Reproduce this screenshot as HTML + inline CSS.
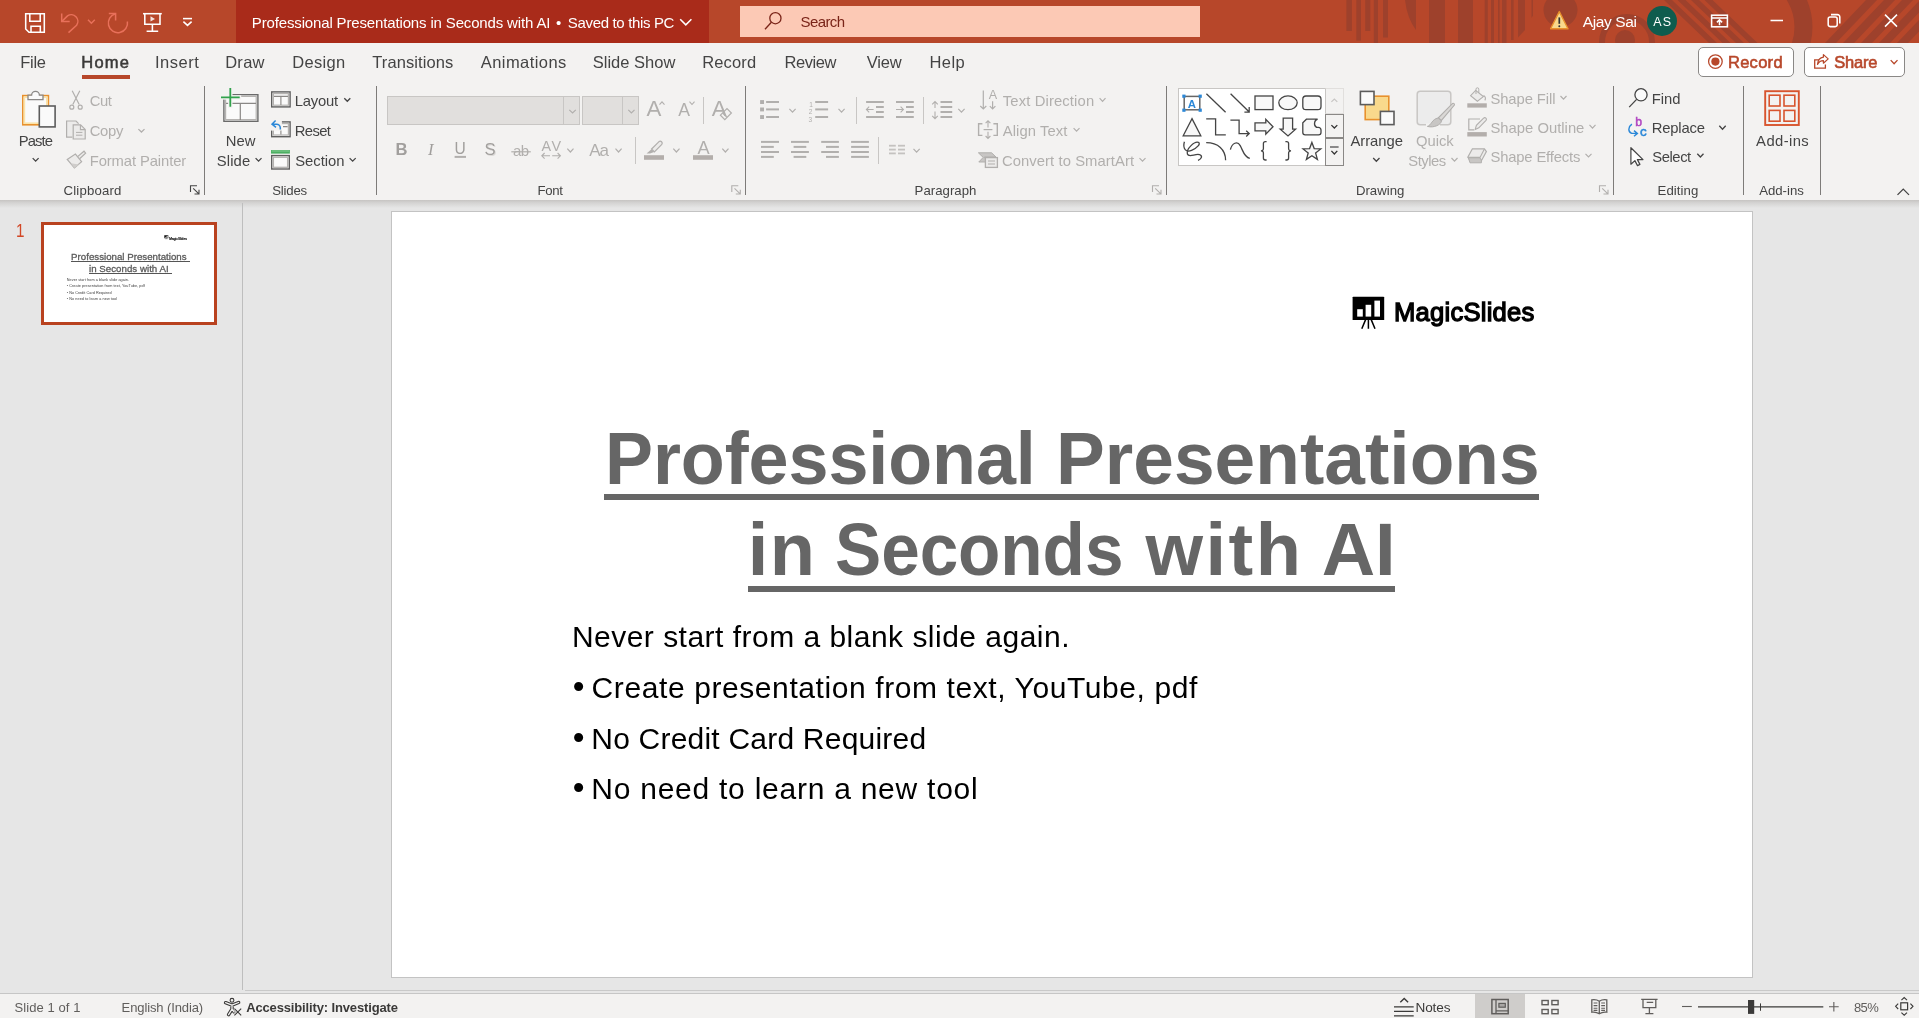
<!DOCTYPE html>
<html lang="en"><head><meta charset="utf-8"><title>PowerPoint</title><style>
html,body{margin:0;padding:0}
body{width:1919px;height:1018px;overflow:hidden;position:relative;background:#e6e6e6;font-family:"Liberation Sans",sans-serif;}
.b{position:absolute;box-sizing:border-box}
.t{position:absolute;white-space:pre;line-height:1}
svg{overflow:visible}
</style></head>
<body>
<div id="app" style="will-change:transform">
<!-- s_title -->
<div class="b" style="left:0px;top:0px;width:1919px;height:43px;background:#B7472A;"></div>
<svg class="b" style="left:0;top:0;overflow:hidden" width="1919" height="43" viewBox="0 0 1919 43" fill="#9E412C"><rect x="1346.4" y="0" width="5.5" height="31"/><rect x="1356.3" y="0" width="4.7" height="40.6"/><rect x="1365.2" y="0" width="5.1" height="31"/><rect x="1373.8" y="0" width="4.2" height="43"/><rect x="1383" y="0" width="5" height="37.5"/><rect x="1429" y="0" width="16" height="43"/><rect x="1458" y="0" width="15" height="43"/><rect x="1484.7" y="0" width="3.1" height="43"/><rect x="1491" y="0" width="3" height="43"/><rect x="1498" y="0" width="1.6" height="43"/><rect x="1502" y="0" width="4.5" height="43"/><rect x="1511" y="0" width="2.6" height="40"/><path d="M1405 0H1416V30Q1407 18 1405 0Z"/><path d="M1518 0H1525V30L1518 37.5Z"/><path d="M1531.5 0H1533V15.6L1531.5 18Z"/><circle cx="1560.5" cy="10" r="17"/><circle cx="1627" cy="42" r="25" fill="none" stroke="#9E412C" stroke-width="6"/><circle cx="1625" cy="40" r="10"/><path d="M1664 0H1672L1717 43H1709Z"/><path d="M1677.5 0H1685.5L1730.5 43H1722.5Z"/><path d="M1691 0H1699L1744 43H1736Z"/><path d="M1704.5 0H1712.5L1757.5 43H1749.5Z"/><path d="M1825 43H1836L1877 0H1866Z"/><path d="M1843 43H1854L1895 0H1884Z"/><path d="M1861 43H1872L1913 0H1902Z"/><path d="M1879 43H1890L1931 0H1920Z"/><path d="M1897 43H1908L1949 0H1938Z"/><path d="M1773.4 -25A60 60 0 0 1 1773.4 79" fill="none" stroke="#9E412C" stroke-width="18"/></svg>
<div class="b" style="left:236px;top:0px;width:472.5px;height:43px;background:#A92B1A;"></div>
<svg class="b" style="left:0px;top:0px;" width="1919" height="43" viewBox="0 0 1919 43" fill="none"><path d="M25.7 13.7H44.3V32.3H29L25.7 29Z" stroke="#fff" stroke-width="1.55" fill="none"/><path d="M29.8 13.7V21.3H40.2V13.7" stroke="#fff" stroke-width="1.55" fill="none"/><path d="M31 32.3V26.2H40.3V32.3" stroke="#fff" stroke-width="1.55" fill="none"/><path d="M61.7 13.6V21.6H69.7" stroke="#E8705A" stroke-width="1.5" fill="none"/><path d="M61.9 21.4L67.5 15.9A6.6 6.6 0 0 1 76.6 25.2L68.5 32.6" stroke="#E8705A" stroke-width="1.5" fill="none"/><path d="M88 19.8L91.4 23.2L94.8 19.8" stroke="#E8705A" stroke-width="1.5" fill="none"/><path d="M108.8 13.6H115.6V20.4" stroke="#E8705A" stroke-width="1.5" fill="none"/><path d="M115.4 13.8A9.6 9.6 0 1 0 127.4 21.5" stroke="#E8705A" stroke-width="1.5" fill="none"/><path d="M143 13.7H161.8" stroke="#fff" stroke-width="1.55" fill="none"/><path d="M144.8 13.7V24.3H160V13.7" stroke="#fff" stroke-width="1.55" fill="none"/><path d="M152.4 24.3V31.3M146.6 31.3H158.2" stroke="#fff" stroke-width="1.55" fill="none"/><path d="M150.5 16.3L155 18.9L150.5 21.5Z" fill="#fff" opacity=".85"/><path d="M183 18.6H192" stroke="#fff" stroke-width="1.55" fill="none"/><path d="M183.4 21.6L187.5 25.4L191.6 21.6" stroke="#fff" stroke-width="1.55" fill="none"/><path d="M680.2 19.2L685.8 24.8L691.4 19.2" stroke="#fff" stroke-width="1.55" fill="none"/></svg>
<span class="t" id="t0" style="left:251.83px;top:15.00px;font-size:15.00px;color:#fff;letter-spacing:-0.150px;">Professional Presentations in Seconds with AI</span>
<span class="t" id="t1" style="left:556.02px;top:15.00px;font-size:15.00px;color:#fff;">•</span>
<span class="t" id="t2" style="left:567.86px;top:15.00px;font-size:15.00px;color:#fff;letter-spacing:-0.342px;">Saved to this PC</span>
<div class="b" style="left:740px;top:6px;width:460px;height:31px;background:#FCC9B5;"></div>
<svg class="b" style="left:740px;top:6px;" width="60" height="31" viewBox="0 0 60 31" fill="none"><circle cx="35.4" cy="12.2" r="5.6" stroke="#7A2418" stroke-width="1.3"/><path d="M31.4 16.2L25 23.2" stroke="#7A2418" stroke-width="1.3"/></svg>
<span class="t" id="t3" style="left:800.56px;top:14.00px;font-size:15.00px;color:#7A2418;letter-spacing:-0.609px;">Search</span>
<svg class="b" style="left:1548px;top:8px;" width="22" height="22" viewBox="0 0 22 22" fill="none"><path d="M11.3 3.600L20 20.800H2.600Z" fill="#F9D98C" stroke="#E8912D" stroke-width="1.400" stroke-linejoin="round"/><path d="M11.3 9.400V15.800" stroke="#333" stroke-width="1.700"/><circle cx="11.3" cy="18.200" r="1" fill="#333"/></svg>
<span class="t" id="t4" style="left:1582.77px;top:14.00px;font-size:15.50px;color:#fff;letter-spacing:-0.372px;">Ajay Sai</span>
<div class="b" style="left:1647px;top:6px;width:30px;height:30px;background:#0F5C4E;border-radius:50%;"></div>
<span class="t" id="t5" style="left:1653.22px;top:16.00px;font-size:12.50px;color:#fff;letter-spacing:1.210px;">AS</span>
<svg class="b" style="left:0px;top:0px;" width="1919" height="43" viewBox="0 0 1919 43" fill="none"><rect x="1711.6" y="15.2" width="15.8" height="11.6" stroke="#fff" stroke-width="1.55" fill="none"/><path d="M1711.6 18H1727.4" stroke="#fff" stroke-width="1.55" fill="none"/><path d="M1719.5 25.2V20M1716.9 22.400L1719.5 19.800L1722.100 22.400" stroke="#fff" stroke-width="1.55" fill="none"/><path d="M1770.5 20.5H1783" stroke="#fff" stroke-width="1.55" fill="none"/><rect x="1828.2" y="17" width="9" height="9.6" rx="2" stroke="#fff" stroke-width="1.55" fill="none"/><path d="M1831 14.6H1837.4A2.4 2.4 0 0 1 1839.8 17V23.6" stroke="#fff" stroke-width="1.55" fill="none"/><path d="M1885 14.6L1897 26.6M1897 14.6L1885 26.6" stroke="#fff" stroke-width="1.55" fill="none"/></svg>
<!-- s_tabs -->
<div class="b" style="left:0px;top:43px;width:1919px;height:157px;background:#F3F2F1;"></div>
<span class="t" id="t6" style="left:20.28px;top:54.00px;font-size:16.50px;color:#444;letter-spacing:-0.277px;">File</span>
<span class="t" id="t7" style="left:154.90px;top:54.00px;font-size:16.50px;color:#444;letter-spacing:0.512px;">Insert</span>
<span class="t" id="t8" style="left:225.15px;top:54.00px;font-size:16.50px;color:#444;letter-spacing:0.292px;">Draw</span>
<span class="t" id="t9" style="left:292.28px;top:54.00px;font-size:16.50px;color:#444;letter-spacing:0.322px;">Design</span>
<span class="t" id="t10" style="left:372.26px;top:54.00px;font-size:16.50px;color:#444;letter-spacing:0.098px;">Transitions</span>
<span class="t" id="t11" style="left:480.72px;top:54.00px;font-size:16.50px;color:#444;letter-spacing:0.442px;">Animations</span>
<span class="t" id="t12" style="left:592.72px;top:54.00px;font-size:16.50px;color:#444;letter-spacing:0.006px;">Slide Show</span>
<span class="t" id="t13" style="left:702.15px;top:54.00px;font-size:16.50px;color:#444;letter-spacing:0.176px;">Record</span>
<span class="t" id="t14" style="left:784.48px;top:54.00px;font-size:16.50px;color:#444;letter-spacing:-0.408px;">Review</span>
<span class="t" id="t15" style="left:866.63px;top:54.00px;font-size:16.50px;color:#444;letter-spacing:-0.100px;">View</span>
<span class="t" id="t16" style="left:929.41px;top:54.00px;font-size:16.50px;color:#444;letter-spacing:0.474px;">Help</span>
<span class="t" id="t17" style="left:81.25px;top:54.00px;font-size:16.50px;color:#3b3a39;letter-spacing:1.228px;-webkit-text-stroke:.55px #3b3a39;">Home</span>
<div class="b" style="left:82px;top:75.3px;width:47.8px;height:3.6px;background:#B7472A;"></div>
<!-- s_rib1 -->
<svg class="b" style="left:0px;top:0px;" width="1919" height="200" viewBox="0 0 1919 200" fill="none"><rect x="22.8" y="95.6" width="25.6" height="29.2" fill="#FAFAFA" stroke="#E8912D" stroke-width="1.6"/><rect x="24.4" y="97.2" width="22.4" height="26" fill="none" stroke="#FBE3A8" stroke-width="1.6"/><path d="M28 99.6V95.2H31.6A3.9 3.9 0 0 1 39.4 95.2H43V99.6Z" fill="#FAFAFA" stroke="#8a8886" stroke-width="1.3"/><rect x="39.3" y="106" width="15.8" height="20.9" fill="#FAFAFA" stroke="#5c5c5c" stroke-width="1.6"/><path d="M32.7 158.1L35.65 161.1L38.6 158.1" stroke="#444" stroke-width="1.3" fill="none"/><path d="M72.2 90.8L79.2 104.4M79.8 90.8L72.8 104.4" stroke="#B1AFAD" stroke-width="1.2"/><circle cx="71.8" cy="107.2" r="2" stroke="#B1AFAD" stroke-width="1.2"/><circle cx="80.2" cy="107.2" r="2" stroke="#B1AFAD" stroke-width="1.2"/><path d="M72.4 137.2H66.6V121H76L78.6 123.6" stroke="#B1AFAD" stroke-width="1.2" fill="#ECEBEA"/><path d="M73.2 124.8H80.6L85.2 129.4V139H73.2Z" stroke="#B1AFAD" stroke-width="1.2" fill="#ECEBEA"/><path d="M80.4 125V129.6H85" stroke="#B1AFAD" stroke-width="1.1"/><path d="M76 132.4H82.4M76 135.2H82.4" stroke="#B1AFAD" stroke-width="1"/><path d="M138.4 129.1L141.45 132L144.5 129.1" stroke="#B1AFAD" stroke-width="1.3" fill="none"/><path d="M77.6 156.6L84 151.2L85.6 153.2L79.6 158.8" stroke="#B1AFAD" stroke-width="1.2" fill="#ECEBEA"/><path d="M67.2 159.4L75.4 154L81.6 161.6L74.4 168Z" stroke="#B1AFAD" stroke-width="1.2" fill="#ECEBEA"/><path d="M70.6 163.2L79 164.6L74.4 168Z" fill="#CFCDCB"/><path d="M190.5 192V185.7H197" stroke="#444" stroke-width="1.1" fill="none"/><path d="M193.2 188.4L198.9 193.9M194.5 194H199V189.7" stroke="#444" stroke-width="1.1" fill="none"/><rect x="223.9" y="94.7" width="34" height="26.6" fill="#FAFAFA" stroke="#6a6a6a" stroke-width="1.4"/><rect x="225.6" y="96.4" width="30.6" height="23.2" fill="none" stroke="#B5B3B1" stroke-width="1.2"/><path d="M226 103.4H256M240.3 103.4V120" stroke="#8a8886" stroke-width="1.2"/><rect x="219.6" y="95.2" width="21.6" height="4.4" fill="#F3F2F1"/><rect x="228.100" y="88" width="4.400" height="20.200" fill="#F3F2F1"/><rect x="219.600" y="91" width="10" height="6" fill="#F3F2F1"/><path d="M221 97.4H239.7M230.3 88V106.8" stroke="#31A24C" stroke-width="1.8"/><path d="M255.6 158.1L258.55 161.1L261.5 158.1" stroke="#444" stroke-width="1.3" fill="none"/><rect x="271.7" y="91.9" width="18.4" height="15" fill="#FAFAFA" stroke="#5f5f5f" stroke-width="1.4"/><rect x="273.4" y="93.6" width="15" height="11.6" fill="none" stroke="#B5B3B1" stroke-width="1.2"/><path d="M274 96.4H288M280.9 96.4V105" stroke="#8a8886" stroke-width="1.1"/><path d="M344.3 98.2L347.3 101.3L350.3 98.2" stroke="#444" stroke-width="1.3" fill="none"/><rect x="271.7" y="121.9" width="18.4" height="14.8" fill="#FAFAFA" stroke="#5f5f5f" stroke-width="1.4"/><rect x="273.4" y="123.6" width="15" height="11.4" fill="none" stroke="#B5B3B1" stroke-width="1.2"/><path d="M283 126.6H287.6M280.9 129.5V134.6" stroke="#8a8886" stroke-width="1.1"/><rect x="269.5" y="118.6" width="12.4" height="12" fill="#F3F2F1"/><path d="M275.6 120.4L272 124.2L276 127.4M272.2 124.2H276.6A3.7 3.7 0 0 1 280.3 127.9V129.6" stroke="#2B88D8" stroke-width="1.5" fill="none"/><rect x="271" y="150" width="18.9" height="3.6" fill="#4CAF62"/><rect x="271.7" y="150.4" width="17.6" height="1.2" fill="#7CC98C"/><rect x="271.7" y="155.6" width="17.6" height="13.4" fill="#FAFAFA" stroke="#5f5f5f" stroke-width="1.4"/><rect x="273.4" y="157.3" width="14.2" height="10" fill="none" stroke="#B5B3B1" stroke-width="1.3"/><path d="M349.6 158.1L352.65 161.1L355.7 158.1" stroke="#444" stroke-width="1.3" fill="none"/></svg>
<span class="t" id="t18" style="left:18.68px;top:134.00px;font-size:14.80px;color:#444;letter-spacing:-0.908px;">Paste</span>
<span class="t" id="t19" style="left:89.70px;top:94.00px;font-size:14.80px;color:#B1AFAD;letter-spacing:-0.389px;">Cut</span>
<span class="t" id="t20" style="left:89.70px;top:124.00px;font-size:14.80px;color:#B1AFAD;letter-spacing:-0.309px;">Copy</span>
<span class="t" id="t21" style="left:89.72px;top:154.00px;font-size:14.80px;color:#B1AFAD;letter-spacing:-0.105px;">Format Painter</span>
<span class="t" id="t22" style="left:63.55px;top:184.00px;font-size:13.20px;color:#444;letter-spacing:0.169px;">Clipboard</span>
<span class="t" id="t23" style="left:225.68px;top:134.00px;font-size:14.80px;color:#444;letter-spacing:0.133px;">New</span>
<span class="t" id="t24" style="left:216.81px;top:154.00px;font-size:14.80px;color:#444;letter-spacing:0.119px;">Slide</span>
<span class="t" id="t25" style="left:294.70px;top:94.00px;font-size:14.80px;color:#444;letter-spacing:-0.184px;">Layout</span>
<span class="t" id="t26" style="left:294.70px;top:124.00px;font-size:14.80px;color:#444;letter-spacing:-0.591px;">Reset</span>
<span class="t" id="t27" style="left:295.23px;top:154.00px;font-size:14.80px;color:#444;letter-spacing:-0.022px;">Section</span>
<span class="t" id="t28" style="left:272.29px;top:184.00px;font-size:13.20px;color:#444;letter-spacing:-0.217px;">Slides</span>
<div class="b" style="left:204px;top:86px;width:1px;height:109px;background:#7d7b79;"></div>
<div class="b" style="left:376px;top:86px;width:1px;height:109px;background:#7d7b79;"></div>
<!-- s_rib2 -->
<div class="b" style="left:387px;top:96px;width:193px;height:29px;background:#E1DFDD;border:1px solid #C8C6C4;"></div>
<div class="b" style="left:563px;top:97px;width:1px;height:27px;background:#C8C6C4;"></div>
<div class="b" style="left:582px;top:96px;width:57px;height:29px;background:#E1DFDD;border:1px solid #C8C6C4;"></div>
<div class="b" style="left:622px;top:97px;width:1px;height:27px;background:#C8C6C4;"></div>
<div class="b" style="left:703px;top:97px;width:1px;height:27px;background:#C8C6C4;"></div>
<div class="b" style="left:635px;top:137px;width:1px;height:27px;background:#C8C6C4;"></div>
<div class="b" style="left:856px;top:97px;width:1px;height:27px;background:#C8C6C4;"></div>
<div class="b" style="left:923px;top:97px;width:1px;height:27px;background:#C8C6C4;"></div>
<div class="b" style="left:878px;top:137px;width:1px;height:27px;background:#C8C6C4;"></div>
<svg class="b" style="left:0px;top:0px;" width="1919" height="200" viewBox="0 0 1919 200" fill="none"><path d="M569.3 109.9L572.55 113L575.8 109.9" stroke="#B1AFAD" stroke-width="1.2" fill="none"/><path d="M628.3 109.9L631.4 113L634.5 109.9" stroke="#B1AFAD" stroke-width="1.2" fill="none"/><path d="M659.5 104.6L662 101.8L664.5 104.6" stroke="#B1AFAD" stroke-width="1.1" fill="none"/><path d="M689.5 101.7L692 104.5L694.5 101.7" stroke="#B1AFAD" stroke-width="1.1" fill="none"/><path d="M720.4 115.2L727 108.6L731.4 113L724.8 119.6Z" fill="#F3F2F1" stroke="#B1AFAD" stroke-width="1.2"/><path d="M722.6 113L727 117.4" stroke="#B1AFAD" stroke-width="1.2"/><path d="M454.6 156.9H466" stroke="#B1AFAD" stroke-width="2"/><path d="M511.3 151.8H530.8" stroke="#B1AFAD" stroke-width="1.2"/><path d="M541.8 155.8H550M544.6 153L541.8 155.8L544.6 158.6M552.2 155.8H560.4M557.6 153L560.4 155.8L557.6 158.6" stroke="#B1AFAD" stroke-width="1.1" fill="none"/><path d="M567.3 148.7L570.4 152L573.5 148.7" stroke="#B1AFAD" stroke-width="1.2" fill="none"/><path d="M615.5 148.7L618.55 152L621.6 148.7" stroke="#B1AFAD" stroke-width="1.2" fill="none"/><path d="M651.6 149L659 141.6A2 2 0 0 1 661.8 144.4L654.4 151.8Z" fill="#ECEBEA" stroke="#B1AFAD" stroke-width="1.2"/><path d="M651.4 149.2L654.2 152L650 153.4H646.6Z" fill="#B1AFAD"/><rect x="644" y="155.2" width="20" height="4.6" fill="#B3AEAB"/><path d="M673.3 148.7L676.4 152L679.5 148.7" stroke="#B1AFAD" stroke-width="1.2" fill="none"/><rect x="693" y="155.2" width="20" height="4.6" fill="#B3AEAB"/><path d="M722.3 148.7L725.4 152L728.5 148.7" stroke="#B1AFAD" stroke-width="1.2" fill="none"/><path d="M731.8 192V185.7H738.3" stroke="#B1AFAD" stroke-width="1.1" fill="none"/><path d="M734.5 188.4L740.2 193.9M735.8 194H740.3V189.7" stroke="#B1AFAD" stroke-width="1.1" fill="none"/><rect x="760.1" y="100.1" width="3.9" height="3.9" fill="#B1AFAD"/><path d="M766.1 102H779" stroke="#B1AFAD" stroke-width="2"/><path d="M815.2 102H828.1" stroke="#B1AFAD" stroke-width="2"/><rect x="760.1" y="107.5" width="3.9" height="3.9" fill="#B1AFAD"/><path d="M766.1 109.4H779" stroke="#B1AFAD" stroke-width="2"/><path d="M815.2 109.4H828.1" stroke="#B1AFAD" stroke-width="2"/><rect x="760.1" y="115.1" width="3.9" height="3.9" fill="#B1AFAD"/><path d="M766.1 117H779" stroke="#B1AFAD" stroke-width="2"/><path d="M815.2 117H828.1" stroke="#B1AFAD" stroke-width="2"/><path d="M789.4 108.9L792.5 112.1L795.6 108.9" stroke="#B1AFAD" stroke-width="1.2" fill="none"/><path d="M838.5 108.9L841.55 112.1L844.6 108.9" stroke="#B1AFAD" stroke-width="1.2" fill="none"/><path d="M866.1 102H883.8" stroke="#B1AFAD" stroke-width="2"/><path d="M866.1 117H883.8" stroke="#B1AFAD" stroke-width="2"/><path d="M876 107H883.8" stroke="#B1AFAD" stroke-width="2"/><path d="M876 112H883.8" stroke="#B1AFAD" stroke-width="2"/><path d="M866.4 109.5H873.6M869.2 106.7L866.4 109.5L869.2 112.3" stroke="#B1AFAD" stroke-width="1.1" fill="none"/><path d="M896 102H913.8" stroke="#B1AFAD" stroke-width="2"/><path d="M896 117H913.8" stroke="#B1AFAD" stroke-width="2"/><path d="M906 107H913.8" stroke="#B1AFAD" stroke-width="2"/><path d="M906 112H913.8" stroke="#B1AFAD" stroke-width="2"/><path d="M896 109.5H903.4M900.6 106.7L903.4 109.5L900.6 112.3" stroke="#B1AFAD" stroke-width="1.1" fill="none"/><path d="M940.5 102H952.2" stroke="#B1AFAD" stroke-width="2"/><path d="M940.5 107H952.2" stroke="#B1AFAD" stroke-width="2"/><path d="M940.5 112H952.2" stroke="#B1AFAD" stroke-width="2"/><path d="M940.5 117H952.2" stroke="#B1AFAD" stroke-width="2"/><path d="M935 101.8V108M932.2 104.4L935 101.6L937.8 104.4M935 111.4V118.4M932.2 115.8L935 118.6L937.8 115.8" stroke="#B1AFAD" stroke-width="1.1" fill="none"/><path d="M958.3 108.9L961.45 112.1L964.6 108.9" stroke="#B1AFAD" stroke-width="1.2" fill="none"/><path d="M761 141.9H779" stroke="#B1AFAD" stroke-width="2"/><path d="M791 141.9H808.9" stroke="#B1AFAD" stroke-width="2"/><path d="M821.2 141.9H838.9" stroke="#B1AFAD" stroke-width="2"/><path d="M851.1 141.9H868.9" stroke="#B1AFAD" stroke-width="2"/><path d="M761 146.9H773.8" stroke="#B1AFAD" stroke-width="2"/><path d="M793.6 146.9H806.3" stroke="#B1AFAD" stroke-width="2"/><path d="M826 146.9H838.9" stroke="#B1AFAD" stroke-width="2"/><path d="M851.1 146.9H868.9" stroke="#B1AFAD" stroke-width="2"/><path d="M761 152H779" stroke="#B1AFAD" stroke-width="2"/><path d="M791 152H808.9" stroke="#B1AFAD" stroke-width="2"/><path d="M821.2 152H838.9" stroke="#B1AFAD" stroke-width="2"/><path d="M851.1 152H868.9" stroke="#B1AFAD" stroke-width="2"/><path d="M761 156.9H773.8" stroke="#B1AFAD" stroke-width="2"/><path d="M793.6 156.9H806.3" stroke="#B1AFAD" stroke-width="2"/><path d="M826 156.9H838.9" stroke="#B1AFAD" stroke-width="2"/><path d="M851.1 156.9H868.9" stroke="#B1AFAD" stroke-width="2"/><path d="M889 145.7H895.8" stroke="#C4C2C0" stroke-width="1.8"/><path d="M898 145.7H905" stroke="#C4C2C0" stroke-width="1.8"/><path d="M889 149.6H895.8" stroke="#C4C2C0" stroke-width="1.8"/><path d="M898 149.6H905" stroke="#C4C2C0" stroke-width="1.8"/><path d="M889 153.4H895.8" stroke="#C4C2C0" stroke-width="1.8"/><path d="M898 153.4H905" stroke="#C4C2C0" stroke-width="1.8"/><path d="M913.5 148.8L916.6 152.2L919.7 148.8" stroke="#B1AFAD" stroke-width="1.2" fill="none"/><path d="M983.3 90.4V109M980.3 106L983.3 109L986.3 106" stroke="#B1AFAD" stroke-width="1.2" fill="none"/><path d="M992.6 101.2V109M989.8 106.2L992.6 109L995.4 106.2" stroke="#B1AFAD" stroke-width="1.2" fill="none"/><path d="M1099.6 98.2L1102.55 101.3L1105.5 98.2" stroke="#B1AFAD" stroke-width="1.2" fill="none"/><path d="M982.4 123.8H978.6V135.4H982.4M993.4 123.8H997.3V135.4H993.4" stroke="#B1AFAD" stroke-width="1.4" fill="none"/><path d="M983.6 129.6H992.4" stroke="#B1AFAD" stroke-width="1.2"/><path d="M988 121V127.4M985.6 123.2L988 120.8L990.4 123.2M988 131.8V138.2M985.6 136L988 138.4L990.4 136" stroke="#B1AFAD" stroke-width="1.1" fill="none"/><path d="M1073.6 128.2L1076.55 131.2L1079.5 128.2" stroke="#B1AFAD" stroke-width="1.2" fill="none"/><path d="M978.4 152.8H991.6L996 157H984.4L987.8 162H978.8L983.2 157.4Z" fill="#C8C6C4" stroke="#B1AFAD" stroke-width="1"/><rect x="985.4" y="157.6" width="12" height="9.8" fill="#ECEBEA" stroke="#B1AFAD" stroke-width="1.3"/><path d="M988 161H995M988 164H995" stroke="#B1AFAD" stroke-width="1"/><path d="M1139.5 158.1L1142.5 161.1L1145.5 158.1" stroke="#B1AFAD" stroke-width="1.2" fill="none"/><path d="M1152.5 192V185.7H1159" stroke="#B1AFAD" stroke-width="1.1" fill="none"/><path d="M1155.2 188.4L1160.9 193.9M1156.5 194H1161V189.7" stroke="#B1AFAD" stroke-width="1.1" fill="none"/></svg>
<span class="t" id="t29" style="left:646.56px;top:98.00px;font-size:22.30px;color:#B1AFAD;">A</span>
<span class="t" id="t30" style="left:678.24px;top:102.00px;font-size:17.60px;color:#B1AFAD;">A</span>
<span class="t" id="t31" style="left:711.73px;top:98.00px;font-size:22.30px;color:#B1AFAD;">A</span>
<span class="t" id="t32" style="left:395.57px;top:142.00px;font-size:16.60px;color:#A19F9D;font-weight:700;">B</span>
<span class="t" id="t33" style="left:428.09px;top:142.00px;font-size:16.60px;color:#A19F9D;font-style:italic;font-family:'Liberation Serif',serif;">I</span>
<span class="t" id="t34" style="left:454.45px;top:141.00px;font-size:15.60px;color:#A19F9D;">U</span>
<span class="t" id="t35" style="left:484.56px;top:142.00px;font-size:16.60px;color:#A19F9D;text-shadow:1px 1px 0 #DCDAD8;">S</span>
<span class="t" id="t36" style="left:512.93px;top:143.00px;font-size:15.00px;color:#B1AFAD;letter-spacing:-0.441px;">ab</span>
<span class="t" id="t37" style="left:541.38px;top:139.00px;font-size:14.40px;color:#B1AFAD;letter-spacing:1.476px;">AV</span>
<span class="t" id="t38" style="left:589.37px;top:142.00px;font-size:17.00px;color:#B1AFAD;letter-spacing:-1.172px;">Aa</span>
<span class="t" id="t39" style="left:697.44px;top:139.00px;font-size:18.20px;color:#B1AFAD;">A</span>
<span class="t" id="t40" style="left:809.15px;top:102.00px;font-size:6.50px;color:#B1AFAD;">1</span>
<span class="t" id="t41" style="left:808.67px;top:109.00px;font-size:6.50px;color:#B1AFAD;">2</span>
<span class="t" id="t42" style="left:808.61px;top:117.00px;font-size:6.50px;color:#B1AFAD;">3</span>
<span class="t" id="t43" style="left:988.68px;top:89.00px;font-size:12.60px;color:#B1AFAD;">A</span>
<span class="t" id="t44" style="left:1002.77px;top:94.00px;font-size:14.80px;color:#B1AFAD;letter-spacing:0.133px;">Text Direction</span>
<span class="t" id="t45" style="left:1002.83px;top:124.00px;font-size:14.80px;color:#B1AFAD;letter-spacing:0.069px;">Align Text</span>
<span class="t" id="t46" style="left:1001.95px;top:154.00px;font-size:14.80px;color:#B1AFAD;letter-spacing:0.078px;">Convert to SmartArt</span>
<span class="t" id="t47" style="left:537.58px;top:184.00px;font-size:13.20px;color:#444;letter-spacing:-0.321px;">Font</span>
<span class="t" id="t48" style="left:914.59px;top:184.00px;font-size:13.20px;color:#444;letter-spacing:0.029px;">Paragraph</span>
<div class="b" style="left:745px;top:86px;width:1px;height:109px;background:#7d7b79;"></div>
<div class="b" style="left:1166px;top:86px;width:1px;height:109px;background:#7d7b79;"></div>
<!-- s_rib3 -->
<div class="b" style="left:1178px;top:88px;width:166px;height:78px;background:#fff;border:1px solid #C8C6C4;"></div>
<div class="b" style="left:1325px;top:88px;width:19px;height:26px;background:#F3F2F1;border:1px solid #E1DFDD;border-left-color:#C8C6C4;"></div>
<div class="b" style="left:1325px;top:114px;width:19px;height:24px;background:#F3F2F1;border:1px solid #8A8886;"></div>
<div class="b" style="left:1325px;top:138px;width:19px;height:28px;background:#F3F2F1;border:1px solid #8A8886;"></div>
<div class="b" style="left:1698px;top:47px;width:96px;height:30px;background:#fff;border:1px solid #8A8886;border-radius:5px;"></div>
<div class="b" style="left:1804px;top:47px;width:101px;height:30px;background:#fff;border:1px solid #8A8886;border-radius:5px;"></div>
<svg class="b" style="left:0px;top:0px;" width="1919" height="200" viewBox="0 0 1919 200" fill="none"><path d="M1331.4 101.9L1334.35 99L1337.3 101.9" stroke="#C8C6C4" stroke-width="1.2" fill="none"/><path d="M1331.4 125.1L1334.35 128L1337.3 125.1" stroke="#333" stroke-width="1.3" fill="none"/><path d="M1330 147H1338.6" stroke="#333" stroke-width="1.1"/><path d="M1331.4 150.9L1334.35 154L1337.3 150.9" stroke="#333" stroke-width="1.3" fill="none"/><rect x="1184.2" y="96.4" width="15.6" height="13.4" fill="none" stroke="#666" stroke-width="1.5"/><rect x="1182.3" y="94.6" width="3.2" height="3.2" fill="#2B88D8"/><rect x="1198.6" y="94.6" width="3.2" height="3.2" fill="#2B88D8"/><rect x="1182.3" y="108.6" width="3.2" height="3.2" fill="#2B88D8"/><rect x="1198.6" y="108.6" width="3.2" height="3.2" fill="#2B88D8"/><path d="M1206.4 93.7L1225.6 112.3" stroke="#444" stroke-width="1.3"/><path d="M1230.6 93.7L1249 111.8M1249.2 107V112.2H1244.4" stroke="#444" stroke-width="1.3" fill="none"/><rect x="1255" y="96" width="18" height="13.6" fill="#F8F8F8" stroke="#444" stroke-width="1.3"/><ellipse cx="1288" cy="102.8" rx="9.2" ry="6.9" fill="#F8F8F8" stroke="#444" stroke-width="1.3"/><rect x="1302.8" y="96" width="18.2" height="13.6" rx="3.2" fill="#F8F8F8" stroke="#444" stroke-width="1.3"/><path d="M1192 118.6L1200.8 135.8H1183.2Z" fill="#F8F8F8" stroke="#444" stroke-width="1.3" stroke-linejoin="miter"/><path d="M1206.2 118.8H1215.6V134.9H1225.8" fill="none" stroke="#444" stroke-width="1.3"/><path d="M1230.4 120.2H1239.1V133.6H1249M1246.2 130.8L1249.2 133.6L1246.2 136.4" fill="none" stroke="#444" stroke-width="1.3"/><path d="M1255 122.8H1265.8V119.4L1273 126.8L1265.8 134.2V130.8H1255Z" fill="#F8F8F8" stroke="#444" stroke-width="1.3"/><path d="M1283.2 118.2H1292.6V129.2H1295.6L1288 136L1280.2 129.2H1283.2Z" fill="#F8F8F8" stroke="#444" stroke-width="1.3"/><path d="M1306.4 119.2H1317.6A4.6 4.6 0 0 0 1316.6 127.4H1318.4A2.6 2.6 0 0 1 1321 130V132.4A2.4 2.4 0 0 1 1318.6 134.8H1305.2A2.4 2.4 0 0 1 1302.8 132.4V122.8Z" fill="#F8F8F8" stroke="#444" stroke-width="1.3"/><path d="M1184.4 141.8C1182.4 148.6 1186 152.8 1191.6 150.4C1197.4 148 1201 143.6 1198.4 142.4C1194.8 141 1186 148.6 1187.4 154C1188.6 158.4 1196.6 152.6 1200.4 155C1203 156.8 1200.4 159.4 1198 160.4" fill="none" stroke="#444" stroke-width="1.3"/><path d="M1206.2 142.6C1218 142.6 1225.6 149.6 1225.6 160.2" fill="none" stroke="#444" stroke-width="1.3"/><path d="M1230.4 149.6C1232 143 1237.4 140.6 1240.2 145.6C1243 150.6 1244 157 1249.8 158.4" fill="none" stroke="#444" stroke-width="1.3"/><path d="M1266.6 141.6H1265.4A2 2 0 0 0 1263.4 143.6V148.4A2.2 2.2 0 0 1 1261 150.8A2.2 2.2 0 0 1 1263.4 153.2V158A2 2 0 0 0 1265.4 160H1266.6" fill="none" stroke="#444" stroke-width="1.3"/><path d="M1285.4 141.6H1286.6A2 2 0 0 1 1288.6 143.6V148.4A2.2 2.2 0 0 0 1291 150.8A2.2 2.2 0 0 0 1288.6 153.2V158A2 2 0 0 1 1286.600 160H1285.4" fill="none" stroke="#444" stroke-width="1.3"/><path d="M1311.9 142.4L1314.2 148.6L1320.8 148.9L1315.6 153L1317.4 159.4L1311.9 155.7L1306.4 159.4L1308.2 153L1303 148.9L1309.600 148.6Z" fill="#F8F8F8" stroke="#444" stroke-width="1.3" stroke-linejoin="miter"/><rect x="1365.2" y="96.2" width="23.6" height="23.4" fill="#F9D98C" stroke="#E8912D" stroke-width="1.6"/><rect x="1360.4" y="91.4" width="13.6" height="13.2" fill="#FAFAFA" stroke="#5c5c5c" stroke-width="1.6"/><rect x="1380.4" y="111.4" width="13.6" height="13.2" fill="#FAFAFA" stroke="#5c5c5c" stroke-width="1.6"/><path d="M1373.2 158L1376.35 161.2L1379.5 158" stroke="#444" stroke-width="1.3" fill="none"/><rect x="1417.2" y="91.3" width="33.6" height="33.4" rx="3" fill="#ECECEC" stroke="#C8C6C4" stroke-width="1.5"/><path d="M1426 124.8H1440" stroke="#F3F2F1" stroke-width="3"/><path d="M1452.600 103.4A1.300 1.300 0 0 1 1454.4 105L1441.4 120.4L1438.4 117.800Z" fill="#DAD8D6" stroke="#B1AFAD" stroke-width="1.1"/><path d="M1438.2 118L1441.4 120.800C1441.4 124.600 1434 128.200 1427.400 126.400C1431.400 125.400 1431.800 119 1438.2 118Z" fill="#C8C6C4" stroke="#B1AFAD" stroke-width="1"/><path d="M1451.5 158L1454.5 161.2L1457.5 158" stroke="#B1AFAD" stroke-width="1.2" fill="none"/><path d="M1475.600 90.400L1483.400 96.600L1477.400 101.200L1470.600 95.600Z" fill="#ECEBEA" stroke="#B1AFAD" stroke-width="1.1"/><path d="M1476 94V89.200A1.400 1.400 0 0 1 1478.800 89.200V93" fill="none" stroke="#B1AFAD" stroke-width="1"/><path d="M1483.600 95.400C1485.600 97 1485.600 99.200 1484.800 100.400" fill="none" stroke="#B1AFAD" stroke-width="1.1"/><rect x="1467.300" y="103.300" width="19.500" height="4.300" fill="#B3AEAB"/><path d="M1560.5 96L1563.5 99.2L1566.5 96" stroke="#B1AFAD" stroke-width="1.2" fill="none"/><path d="M1480 119H1468.800V129.800H1474" fill="none" stroke="#B1AFAD" stroke-width="1.2"/><path d="M1475.200 129.400L1476.400 125.400L1483.600 118.200A1.500 1.500 0 0 1 1486 120.400L1478.800 127.800Z" fill="#ECEBEA" stroke="#B1AFAD" stroke-width="1.100"/><rect x="1467.300" y="132.100" width="19.500" height="4.400" fill="#B3AEAB"/><path d="M1589.5 124.9L1592.5 128.1L1595.5 124.9" stroke="#B1AFAD" stroke-width="1.2" fill="none"/><path d="M1472.400 148.800H1484.400L1486.400 151.600L1481.800 160H1469.800L1467.800 157.200Z" fill="#ECEBEA" stroke="#B1AFAD" stroke-width="1.2"/><path d="M1468 157.400H1480L1484.400 149" fill="none" stroke="#B1AFAD" stroke-width="1.100"/><path d="M1468.400 157.800H1479.800L1481.400 160V162.800H1470Z" fill="#C8C6C4" stroke="#B1AFAD" stroke-width="1"/><path d="M1585.5 153.9L1588.5 157L1591.5 153.9" stroke="#B1AFAD" stroke-width="1.2" fill="none"/><path d="M1599.5 192V185.7H1606" stroke="#B1AFAD" stroke-width="1.1" fill="none"/><path d="M1602.2 188.4L1607.9 193.9M1603.5 194H1608V189.7" stroke="#B1AFAD" stroke-width="1.1" fill="none"/><circle cx="1641" cy="94.800" r="6.100" fill="#FAFAFA" stroke="#444" stroke-width="1.300"/><path d="M1636.600 99.400L1629.200 107.100" stroke="#444" stroke-width="1.300"/><path d="M1631.900 124.200C1628 126.800 1627.800 131.800 1631.600 133.400H1637.400M1634 130.600L1637.400 133.400L1634 136.200" fill="none" stroke="#2B88D8" stroke-width="1.400"/><path d="M1719.3 125.8L1722.5 129.3L1725.7 125.8" stroke="#444" stroke-width="1.3" fill="none"/><path d="M1630.900 147.700V164.200L1634.900 160.600L1637.500 165.600L1639.900 164.400L1637.400 159.600H1643Z" fill="#fff" stroke="#444" stroke-width="1.200" stroke-linejoin="round"/><path d="M1697.3 153.7L1700.4 157L1703.5 153.7" stroke="#444" stroke-width="1.3" fill="none"/><rect x="1765.200" y="91.200" width="33.600" height="33.800" fill="none" stroke="#D8542E" stroke-width="1.900"/><rect x="1769.2" y="95.2" width="10.800" height="10.800" fill="none" stroke="#D8542E" stroke-width="1.600"/><rect x="1784" y="95.2" width="10.800" height="10.800" fill="none" stroke="#D8542E" stroke-width="1.600"/><rect x="1769.2" y="110.4" width="10.800" height="10.800" fill="none" stroke="#D8542E" stroke-width="1.600"/><rect x="1784" y="110.4" width="10.800" height="10.800" fill="none" stroke="#D8542E" stroke-width="1.600"/><path d="M1897.5 194.9L1903.25 189.1L1909 194.9" stroke="#444" stroke-width="1.3" fill="none"/><circle cx="1715.400" cy="61.600" r="6.800" stroke="#B7472A" stroke-width="1.300"/><circle cx="1715.400" cy="61.600" r="4.100" fill="#B7472A"/><path d="M1819 59.800H1814.700V68.200H1825.400V64.600" fill="none" stroke="#B7472A" stroke-width="1.300"/><path d="M1817.500 64.400C1817.900 60.400 1820 57.600 1823.400 57.200V54.600L1828.200 58.900L1823.400 63.200V60.600C1820.800 60.600 1818.900 61.800 1817.500 64.400Z" fill="#fff" stroke="#B7472A" stroke-width="1.200" stroke-linejoin="round"/><path d="M1890.7 60.1L1894.1 63.8L1897.5 60.1" stroke="#B7472A" stroke-width="1.3" fill="none"/></svg>
<span class="t" id="t49" style="left:1187.64px;top:99.00px;font-size:11.40px;color:#2B88D8;font-weight:700;">A</span>
<span class="t" id="t50" style="left:1350.52px;top:134.00px;font-size:14.80px;color:#444;letter-spacing:-0.049px;">Arrange</span>
<span class="t" id="t51" style="left:1415.94px;top:134.00px;font-size:14.80px;color:#B1AFAD;letter-spacing:-0.008px;">Quick</span>
<span class="t" id="t52" style="left:1408.27px;top:154.00px;font-size:14.80px;color:#B1AFAD;letter-spacing:-0.504px;">Styles</span>
<span class="t" id="t53" style="left:1490.45px;top:92.00px;font-size:14.80px;color:#B1AFAD;letter-spacing:-0.089px;">Shape Fill</span>
<span class="t" id="t54" style="left:1490.45px;top:121.00px;font-size:14.80px;color:#B1AFAD;letter-spacing:0.011px;">Shape Outline</span>
<span class="t" id="t55" style="left:1490.45px;top:150.00px;font-size:14.80px;color:#B1AFAD;letter-spacing:-0.159px;">Shape Effects</span>
<span class="t" id="t56" style="left:1355.95px;top:184.00px;font-size:13.20px;color:#444;letter-spacing:0.004px;">Drawing</span>
<span class="t" id="t57" style="left:1651.70px;top:92.00px;font-size:14.80px;color:#444;letter-spacing:-0.008px;">Find</span>
<span class="t" id="t58" style="left:1651.70px;top:121.00px;font-size:14.80px;color:#444;letter-spacing:-0.160px;">Replace</span>
<span class="t" id="t59" style="left:1652.23px;top:150.00px;font-size:14.80px;color:#444;letter-spacing:-0.427px;">Select</span>
<span class="t" id="t60" style="left:1635.14px;top:116.00px;font-size:12.20px;color:#B146C2;-webkit-text-stroke:.5px #B146C2;">b</span>
<span class="t" id="t61" style="left:1640.02px;top:125.00px;font-size:13.40px;color:#2B88D8;-webkit-text-stroke:.5px #2B88D8;">c</span>
<span class="t" id="t62" style="left:1657.58px;top:184.00px;font-size:13.20px;color:#444;letter-spacing:0.053px;">Editing</span>
<span class="t" id="t63" style="left:1756.12px;top:134.00px;font-size:14.80px;color:#444;letter-spacing:0.408px;">Add-ins</span>
<span class="t" id="t64" style="left:1759.15px;top:184.00px;font-size:13.20px;color:#444;letter-spacing:-0.008px;">Add-ins</span>
<span class="t" id="t65" style="left:1727.93px;top:54.00px;font-size:16.50px;color:#B7472A;letter-spacing:0.293px;-webkit-text-stroke:.6px #B7472A;">Record</span>
<span class="t" id="t66" style="left:1834.35px;top:54.00px;font-size:16.50px;color:#B7472A;letter-spacing:-0.244px;-webkit-text-stroke:.6px #B7472A;">Share</span>
<div class="b" style="left:1613px;top:86px;width:1px;height:109px;background:#7d7b79;"></div>
<div class="b" style="left:1743px;top:86px;width:1px;height:109px;background:#7d7b79;"></div>
<div class="b" style="left:1820px;top:86px;width:1px;height:109px;background:#7d7b79;"></div>
<!-- s_work -->
<div class="b" style="left:0px;top:200px;width:1919px;height:8px;background:linear-gradient(#C6C4C2,#D4D3D2 35%,#E6E6E6);"></div>
<div class="b" style="left:242px;top:203px;width:1px;height:787px;background:#BEBEBE;"></div>
<span class="t" id="t67" style="left:15.76px;top:221.00px;font-size:19.00px;color:#D24726;transform:scaleX(.8);transform-origin:0 0;">1</span>
<div class="b" style="left:41px;top:222px;width:176px;height:103px;background:#fff;border:3px solid #B9421F;"></div>
<svg class="b" style="left:163.812px;top:235.312px" width="5" height="4.75" viewBox="1350 294 40 38"><path d="M1352.6 297H1384.2V320H1352.6Z" fill="#000"/><path d="M1352.6 297.600A.8 .8 0 0 1 1353.400 296.800H1383.400A.8 .8 0 0 1 1384.2 297.600" fill="#000"/><rect x="1357.200" y="309.200" width="5.600" height="7.400" fill="#fff"/><rect x="1365.600" y="304.800" width="5.600" height="11.800" fill="#fff"/><rect x="1374.400" y="300.600" width="5.600" height="16" fill="#fff"/><path d="M1365.600 319.600L1361.800 328.800M1368.400 319.600V328.800M1371.200 319.600L1375 328.800" stroke="#000" stroke-width="1.500"/></svg>
<span class="t" id="t68" style="left:169.26px;top:238.00px;font-size:3.20px;color:#000;letter-spacing:0.038px;-webkit-text-stroke:0.163px #000;">MagicSlides</span>
<span class="t" id="t69" style="left:71.08px;top:252.00px;font-size:9.70px;color:#5A5A5A;letter-spacing:0.011px;-webkit-text-stroke:.3px #5A5A5A;">Professional Presentations</span>
<span class="t" id="t70" style="left:88.98px;top:264.00px;font-size:9.70px;color:#5A5A5A;letter-spacing:0.030px;-webkit-text-stroke:.3px #5A5A5A;">in Seconds with AI</span>
<div class="b" style="left:71px;top:261px;width:118.6px;height:1px;background:#555;"></div>
<div class="b" style="left:89px;top:273px;width:83px;height:1px;background:#555;"></div>
<span class="t" id="t71" style="left:66.81px;top:279.00px;font-size:3.75px;color:#3a3a3a;letter-spacing:0.058px;">Never start from a blank slide again.</span>
<span class="t" id="t72" style="left:66.81px;top:285.00px;font-size:3.75px;color:#3a3a3a;letter-spacing:0.066px;">• Create presentation from text, YouTube, pdf</span>
<span class="t" id="t73" style="left:66.74px;top:292.00px;font-size:3.75px;color:#3a3a3a;letter-spacing:0.048px;">• No Credit Card Required</span>
<span class="t" id="t74" style="left:66.81px;top:298.00px;font-size:3.75px;color:#3a3a3a;letter-spacing:0.072px;">• No need to learn a new tool</span>
<div class="b" style="left:391px;top:211px;width:1362px;height:767px;background:#fff;border:1px solid #C3C3C3;"></div>
<svg class="b" style="left:1350px;top:294px" width="40" height="38" viewBox="1350 294 40 38"><path d="M1352.6 297H1384.2V320H1352.6Z" fill="#000"/><path d="M1352.6 297.600A.8 .8 0 0 1 1353.400 296.800H1383.400A.8 .8 0 0 1 1384.2 297.600" fill="#000"/><rect x="1357.200" y="309.200" width="5.600" height="7.400" fill="#fff"/><rect x="1365.600" y="304.800" width="5.600" height="11.800" fill="#fff"/><rect x="1374.400" y="300.600" width="5.600" height="16" fill="#fff"/><path d="M1365.600 319.600L1361.800 328.800M1368.400 319.600V328.800M1371.200 319.600L1375 328.800" stroke="#000" stroke-width="1.500"/></svg>
<span class="t" id="t75" style="left:1394.03px;top:300.00px;font-size:25.60px;color:#000;letter-spacing:0.236px;-webkit-text-stroke:1.300px #000;">MagicSlides</span>
<span class="t" id="t76" style="left:605.21px;top:422.00px;font-size:74.00px;color:#666666;font-weight:700;letter-spacing:-0.083px;transform:scaleX(0.972);transform-origin:0 0;">Professional</span>
<span class="t" id="t77" style="left:1056.30px;top:422.00px;font-size:74.00px;color:#666666;font-weight:700;letter-spacing:0.046px;transform:scaleX(0.987);transform-origin:0 0;">Presentations</span>
<span class="t" id="t78" style="left:747.82px;top:513.00px;font-size:74.00px;color:#666666;font-weight:700;letter-spacing:1.295px;">in</span>
<span class="t" id="t79" style="left:835.28px;top:513.00px;font-size:74.00px;color:#666666;font-weight:700;letter-spacing:-0.098px;transform:scaleX(0.937);transform-origin:0 0;">Seconds</span>
<span class="t" id="t80" style="left:1145.39px;top:513.00px;font-size:74.00px;color:#666666;font-weight:700;letter-spacing:2.506px;">with</span>
<span class="t" id="t81" style="left:1321.63px;top:513.00px;font-size:74.00px;color:#666666;font-weight:700;letter-spacing:-0.182px;">AI</span>
<div class="b" style="left:603.8px;top:494.3px;width:935.3px;height:5.5px;background:#666666;"></div>
<div class="b" style="left:748px;top:586.4px;width:647.3px;height:5.6px;background:#666666;"></div>
<span class="t" id="t82" style="left:571.90px;top:622.00px;font-size:30.00px;color:#000;letter-spacing:0.482px;">Never start from a blank slide again.</span>
<span class="t" id="t83" style="left:572.74px;top:670.00px;font-size:33.50px;color:#000;">•</span>
<span class="t" id="t84" style="left:591.61px;top:673.00px;font-size:30.00px;color:#000;letter-spacing:0.591px;">Create presentation from text, YouTube, pdf</span>
<span class="t" id="t85" style="left:572.74px;top:721.00px;font-size:33.50px;color:#000;">•</span>
<span class="t" id="t86" style="left:591.30px;top:724.00px;font-size:30.00px;color:#000;letter-spacing:0.211px;">No Credit Card Required</span>
<span class="t" id="t87" style="left:572.74px;top:771.00px;font-size:33.50px;color:#000;">•</span>
<span class="t" id="t88" style="left:591.30px;top:774.00px;font-size:30.00px;color:#000;letter-spacing:0.748px;">No need to learn a new tool</span>
<div class="b" style="left:245px;top:990px;width:1674px;height:1px;background:#C9C9C9;"></div>
<!-- s_status -->
<div class="b" style="left:0px;top:993px;width:1919px;height:1px;background:#C6C6C6;"></div>
<div class="b" style="left:0px;top:994px;width:1919px;height:24px;background:#F3F2F1;"></div>
<div class="b" style="left:1475px;top:994px;width:50px;height:24px;background:#CFCDCB;"></div>
<svg class="b" style="left:0px;top:0px;" width="1919" height="1018" viewBox="0 0 1919 1018" fill="none"><path d="M225.600 1002.700L232 1005.200L238.600 1002.500M232 1005.200V1009.200L228.600 1014.600M232 1009.200L234.200 1012" fill="none" stroke="#3B3A39" stroke-width="3.500" stroke-linecap="round" stroke-linejoin="round"/><path d="M225.600 1002.700L232 1005.200L238.600 1002.500M232 1005.200V1009.200L228.600 1014.600M232 1009.200L234.200 1012" fill="none" stroke="#F3F2F1" stroke-width="1.300" stroke-linecap="round" stroke-linejoin="round"/><circle cx="232" cy="1000.300" r="1.900" fill="#F3F2F1" stroke="#3B3A39" stroke-width="1.100"/><path d="M234.400 1008.600L241.200 1015.400M241.200 1008.600L234.400 1015.400" stroke="#F3F2F1" stroke-width="2.800"/><path d="M234.400 1008.600L241.200 1015.400M241.200 1008.600L234.400 1015.400" stroke="#3B3A39" stroke-width="1.100"/><path d="M1394 1006.800H1413.700M1394 1011.300H1413.700M1394 1015.800H1413.700" stroke="#3B3A39" stroke-width="1.200"/><path d="M1400.300 1002.200L1404.200 998.400L1408.100 1002.200" fill="none" stroke="#3B3A39" stroke-width="1.400"/><rect x="1491.900" y="999.500" width="16.300" height="14.200" fill="none" stroke="#605E5C" stroke-width="1.500"/><path d="M1496 1000V1013.400M1496 1010.900H1508.400" stroke="#605E5C" stroke-width="1.300"/><rect x="1498.900" y="1003.400" width="6.400" height="3.800" fill="#A8A6A4" stroke="#605E5C" stroke-width="1.200"/><rect x="1542" y="1000.5" width="6.200" height="4.200" fill="none" stroke="#605E5C" stroke-width="1.400"/><rect x="1551.9" y="1000.5" width="6.200" height="4.200" fill="none" stroke="#605E5C" stroke-width="1.400"/><rect x="1542" y="1009.5" width="6.200" height="4.200" fill="none" stroke="#605E5C" stroke-width="1.400"/><rect x="1551.9" y="1009.5" width="6.200" height="4.200" fill="none" stroke="#605E5C" stroke-width="1.400"/><path d="M1599.300 1001.200C1597 999.600 1594.400 999.400 1591.800 999.800V1012.200C1594.400 1011.800 1597 1012.200 1599.300 1013.800C1601.600 1012.200 1604.200 1011.800 1606.800 1012.200V999.800C1604.200 999.400 1601.600 999.600 1599.300 1001.200ZM1599.300 1001.200V1013.800" fill="none" stroke="#605E5C" stroke-width="1.300"/><path d="M1593.600 1003H1597.400M1593.600 1005.600H1597.400M1593.600 1008.200H1597.400M1601.200 1003H1605M1601.200 1005.600H1605M1601.200 1008.200H1605M1593.600 1010.400H1597.400M1601.200 1010.400H1605" stroke="#605E5C" stroke-width="1.100"/><path d="M1641.200 999.300H1657.600M1643 999.300V1007.600H1655.800V999.300M1649.400 1007.600V1013.400M1645.400 1013.600H1653.400M1646.700 1002.400H1653.200" fill="none" stroke="#605E5C" stroke-width="1.300"/><path d="M1682 1006.500H1691.800" stroke="#605E5C" stroke-width="1.100"/><path d="M1698 1006.900H1823.300" stroke="#3B3A39" stroke-width="1.100"/><path d="M1760.500 1003.400V1010.800" stroke="#3B3A39" stroke-width="1"/><rect x="1748" y="1000" width="6.200" height="13.900" fill="#3B3A39"/><path d="M1829 1006.800H1838.700M1833.850 1002V1011.600" stroke="#605E5C" stroke-width="1.100"/><rect x="1900.800" y="1002.800" width="6.800" height="7" fill="none" stroke="#3B3A39" stroke-width="1.200"/><path d="M1901.400 1000.200L1904.200 997.600L1907 1000.200M1901.400 1012.600L1904.200 1015.200L1907 1012.600M1898.200 1003.600L1895.600 1006.300L1898.200 1009M1910.400 1003.600L1913 1006.300L1910.400 1009" fill="none" stroke="#3B3A39" stroke-width="1.100"/></svg>
<span class="t" id="t89" style="left:14.62px;top:1001.00px;font-size:13.00px;color:#605E5C;letter-spacing:0.070px;">Slide 1 of 1</span>
<span class="t" id="t90" style="left:121.62px;top:1001.00px;font-size:13.00px;color:#605E5C;letter-spacing:-0.110px;">English (India)</span>
<span class="t" id="t91" style="left:246.17px;top:1001.00px;font-size:13.00px;color:#3B3A39;font-weight:700;letter-spacing:-0.141px;">Accessibility: Investigate</span>
<span class="t" id="t92" style="left:1415.47px;top:1001.00px;font-size:13.60px;color:#3B3A39;letter-spacing:-0.123px;">Notes</span>
<span class="t" id="t93" style="left:1853.90px;top:1001.00px;font-size:13.00px;color:#605E5C;letter-spacing:-0.552px;">85%</span>
</div>
</body></html>
